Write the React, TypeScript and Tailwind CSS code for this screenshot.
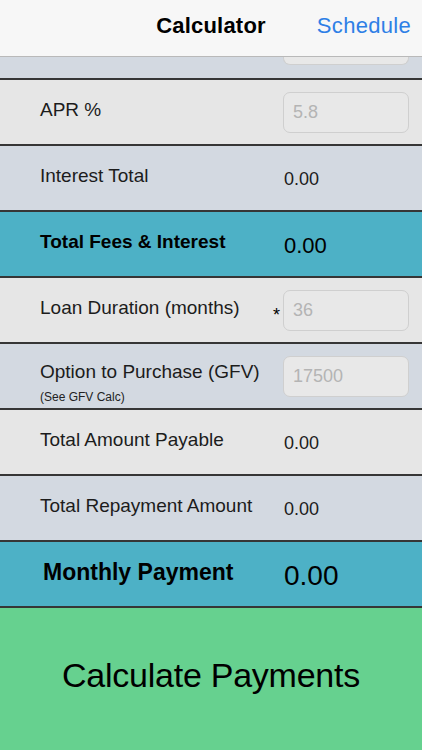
import React from "react";

type RowProps = {
  label: string;
  sub?: string;
  tone: "light" | "blue" | "teal";
  value?: string;
  input?: string;
  star?: boolean;
  big?: boolean;
  bold?: boolean;
};

const toneBg = {
  light: "bg-[#e6e6e6]",
  blue: "bg-[#d3d9e1]",
  teal: "bg-[#4db1c6]",
};

function InputBox({ value }: { value: string }) {
  return (
    <div className="w-[126px] h-[41px] rounded-[7px] border border-[#cfcfcf] bg-[#e8e8e8] flex items-center px-[9px] text-[18px] text-[#b4b4b4]">
      {value}
    </div>
  );
}

function Row({ label, sub, tone, value, input, star, big, bold }: RowProps) {
  return (
    <div className={`h-[66px] border-b-2 border-[#363636] flex items-center ${toneBg[tone]}`}>
      <div className={`w-[283px] shrink-0 flex flex-col ${big ? "pl-[43px]" : "pl-[40px]"} ${sub ? "pt-[10px]" : "pb-[4px]"}`}>
        <span
          className={
            big
              ? "text-[23px] font-bold text-black"
              : bold
              ? "text-[19px] font-bold text-black"
              : "text-[19px] text-[#1c1c1c]"
          }
        >
          {label}
        </span>
        {sub && <span className="text-[12px] text-[#222] leading-[14px] mt-[3px]">{sub}</span>}
      </div>
      {value !== undefined && (
        <span
          className={
            big
              ? "ml-[1px] text-[28px] text-black pt-[4px]"
              : bold
              ? "ml-[1px] text-[22px] text-black pt-[2px]"
              : "ml-[1px] text-[18px] text-[#1c1c1c] pt-[2px]"
          }
        >
          {value}
        </span>
      )}
      {input !== undefined && (
        <div className="relative">
          {star && <span className="absolute -left-[10px] top-[12px] text-[18px] text-black">*</span>}
          <InputBox value={input} />
        </div>
      )}
    </div>
  );
}

export default function App() {
  return (
    <div className="w-[422px] h-[750px] overflow-hidden flex flex-col bg-[#e6e6e6] font-['Liberation_Sans',Arial,sans-serif]">
      <div className="h-[57px] shrink-0 bg-[#f7f7f7] border-b border-[#b9b9b9] flex items-center relative">
        <span className="absolute left-0 right-0 text-center text-[22px] font-semibold text-black tracking-[0.2px] pb-[5px]">
          Calculator
        </span>
        <span className="ml-auto mr-[11px] text-[22px] tracking-[0.3px] text-[#2e7fe6] pb-[5px] relative">Schedule</span>
      </div>
      <div className="h-[23px] shrink-0 bg-[#d3d9e1] border-b-2 border-[#363636] flex items-end pl-[283px]">
        <div className="w-[126px] h-[20px] mb-[13px] rounded-b-[7px] border border-t-0 border-[#cfcfcf] bg-[#e8e8e8]" />
      </div>
      <Row label="APR %" tone="light" input="5.8" />
      <Row label="Interest Total" tone="blue" value="0.00" />
      <Row label="Total Fees & Interest" tone="teal" value="0.00" bold />
      <Row label="Loan Duration (months)" tone="light" input="36" star />
      <Row label="Option to Purchase (GFV)" sub="(See GFV Calc)" tone="blue" input="17500" />
      <Row label="Total Amount Payable" tone="light" value="0.00" />
      <Row label="Total Repayment Amount" tone="blue" value="0.00" />
      <Row label="Monthly Payment" tone="teal" value="0.00" big />
      <button className="flex-1 bg-[#66d18f] flex items-center justify-center text-[34px] text-black tracking-[-0.25px] pb-[8px]">
        Calculate Payments
      </button>
    </div>
  );
}
